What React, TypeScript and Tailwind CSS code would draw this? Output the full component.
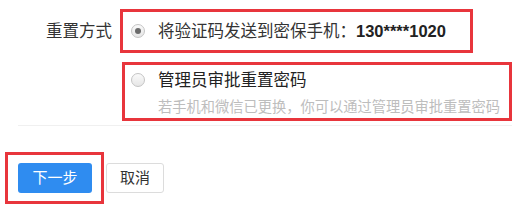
import React from "react";

function Radio({ checked }: { checked?: boolean }) {
  return (
    <span className="flex h-[14px] w-[14px] shrink-0 items-center justify-center rounded-full border border-[#c4c4c4] bg-gradient-to-b from-[#fafafa] to-[#e6e6e6]">
      {checked && <span className="h-[6px] w-[6px] rounded-full bg-[#6b6b6b]" />}
    </span>
  );
}

export default function App() {
  return (
    <div className="relative h-[204px] w-[520px] overflow-hidden bg-white font-['Liberation_Sans','Noto_Sans_CJK_SC',sans-serif] text-[#333]">
      <div className="flex pt-[20px]">
        <div className="w-[112px] text-right text-[16.5px] leading-[22px]">重置方式</div>
        <div className="ml-[19px] flex flex-col">
          <label className="flex h-[22px] items-center">
            <Radio checked />
            <span className="ml-[13px] whitespace-nowrap text-[16.5px] leading-[22px]">
              将验证码发送到密保手机：<b className="font-bold text-[#222]">130****1020</b>
            </span>
          </label>
          <label className="mt-[27px] flex h-[22px] items-center">
            <Radio />
            <span className="ml-[13px] text-[16.5px] leading-[22px] text-[#222]">管理员审批重置密码</span>
          </label>
          <div className="ml-[27px] mt-[6px] whitespace-nowrap text-[14.25px] leading-[20px] text-[#bdbdbd]">
            若手机和微信已更换，你可以通过管理员审批重置密码
          </div>
        </div>
      </div>

      <div className="ml-[18px] mr-[8px] mt-[8px] h-px bg-[#f0f0f0]" />

      <div className="ml-[18px] mt-[37px] flex gap-[14px]">
        <button className="h-[30px] w-[74px] rounded-[3px] bg-[#2f8cf0] text-[15px] text-white">下一步</button>
        <button className="h-[30px] w-[58px] rounded-[3px] border border-[#dcdcdc] bg-white text-[15px] text-[#333]">取消</button>
      </div>

      {/* annotation boxes */}
      <div className="pointer-events-none absolute left-[120px] top-[9px] h-[44px] w-[353px] border-[3px] border-[#e8353c]" />
      <div className="pointer-events-none absolute left-[122px] top-[62px] h-[59px] w-[390px] border-[3px] border-[#e8353c]" />
      <div className="pointer-events-none absolute left-[5px] top-[152px] h-[52px] w-[99px] border-[3px] border-[#e8353c]" />
    </div>
  );
}
